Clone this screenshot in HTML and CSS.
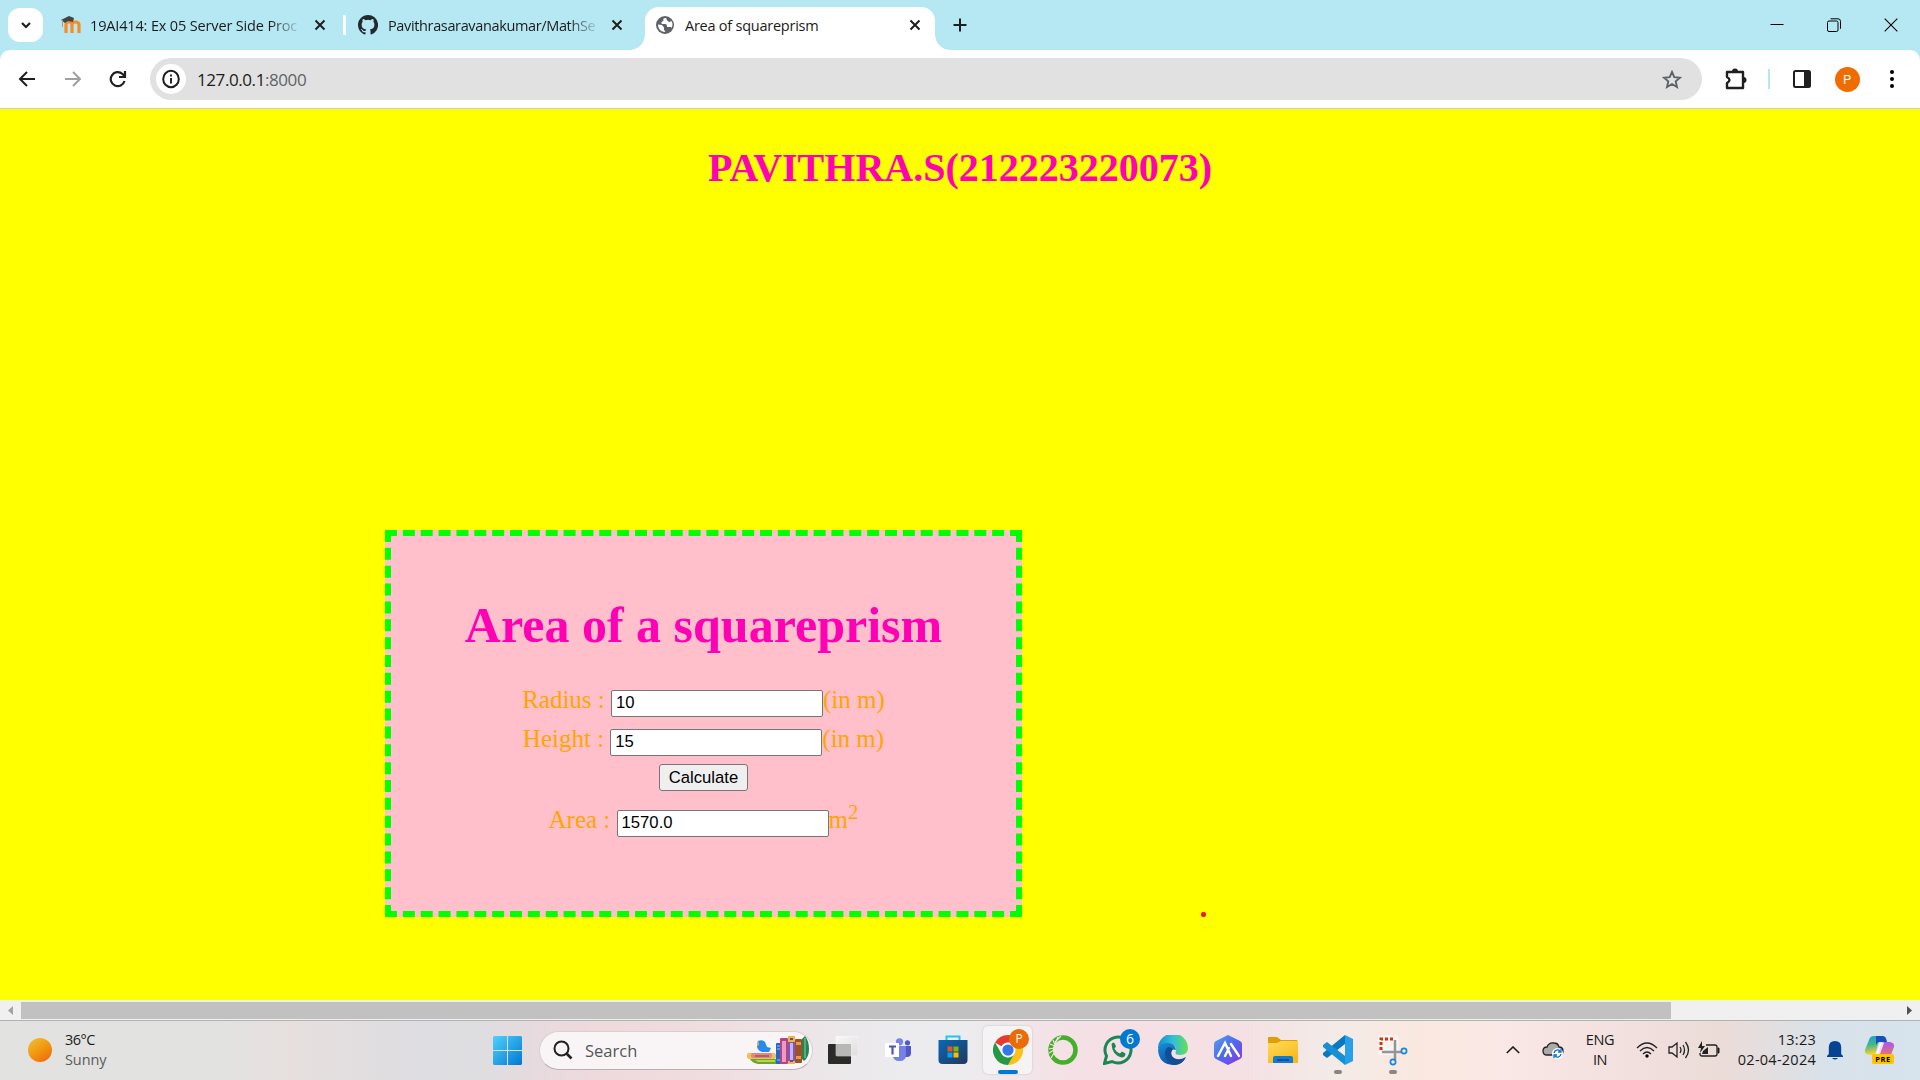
FILE: index.html
```html
<!DOCTYPE html>
<html lang="en">
<head>
<meta charset="utf-8">
<title>Area of squareprism</title>
<link rel="stylesheet" href="styles.css">
</head>
<body>
<header class="tabstrip">
  <button class="tab-search"><svg width="14" height="14" viewBox="0 0 14 14"><path d="M3 5l4 4 4-4" fill="none" stroke="#1f1f1f" stroke-width="2.2"/></svg></button>
  <div class="tab tab-first">
    <svg class="favicon" width="20" height="18" viewBox="0 0 20 18"><path d="M5 17V9q0-3 3-3t3 3v8M11 9q0-3 3.500-3t3.500 3v8" fill="none" stroke="#f98b26" stroke-width="3.200"/><path d="M0 4l8-4 5 2-1 4-5-1-3 2z" fill="#444"/><path d="M1.500 4v7" stroke="#a99b8c" stroke-width="1"/></svg>
    <span class="tab-title fade"><span class="t1">19AI414: Ex 05 Server Side Proc</span></span>
    <svg class="tab-close" width="12" height="12" viewBox="0 0 12 12"><path d="M1.500 1.500l9 9m0-9l-9 9"/></svg>
  </div>
  <span class="tab-sep"></span>
  <div class="tab tab-second">
    <svg class="favicon" width="20" height="20" viewBox="0 0 16 16"><path fill="#24292f" d="M8 0C3.580 0 0 3.580 0 8c0 3.540 2.290 6.530 5.470 7.590.4.070.55-.17.55-.38v-1.490c-2.010.37-2.530-.49-2.690-.94-.09-.23-.48-.94-.82-1.130-.28-.15-.68-.52-.01-.53.63-.01 1.080.58 1.230.82.72 1.210 1.870.87 2.330.66.07-.52.28-.87.51-1.070-1.780-.2-3.640-.89-3.640-3.950 0-.87.31-1.590.82-2.150-.08-.2-.36-1.020.08-2.120 0 0 .67-.21 2.200.82a7.500 7.500 0 0 1 4 0c1.530-1.040 2.200-.82 2.200-.82.44 1.100.16 1.920.08 2.120.51.56.82 1.270.82 2.150 0 3.070-1.870 3.750-3.650 3.950.29.25.54.73.54 1.480v2.200c0 .21.15.46.55.38A8 8 0 0 0 8 0z"/></svg>
    <span class="tab-title fade"><span class="t2">Pavithrasaravanakumar/MathSe</span></span>
    <svg class="tab-close" width="12" height="12" viewBox="0 0 12 12"><path d="M1.500 1.500l9 9m0-9l-9 9"/></svg>
  </div>
  <div class="tab tab-active">
    <svg class="favicon" width="18" height="18" viewBox="0 0 18 18"><circle cx="9" cy="9" r="9" fill="#5f6368"/><path d="M10 2c-3 0-3 1.500-2.500 3C5 5.500 5 7 6 8h3c2 0 2 1.500 2 3h2.500c1.500 0 2 .5 2 1a7 7 0 0 0 0-7l-2 1-2-1zM2 8.500l4 .5 2 2.500v2.200l1.500 2.200C4 16 2 12 2 8.500z" fill="#fff"/></svg>
    <span class="tab-title"><span class="t3">Area of squareprism</span></span>
    <svg class="tab-close" width="12" height="12" viewBox="0 0 12 12"><path d="M1.500 1.500l9 9m0-9l-9 9"/></svg>
  </div>
  <svg class="new-tab" width="14" height="14" viewBox="0 0 14 14"><path d="M7 .5v13M.5 7h13" stroke="#1f1f1f" stroke-width="2"/></svg>
  <div class="window-controls">
    <svg width="14" height="14" viewBox="0 0 14 14"><path d="M.5 6.500h13" stroke="#000"/></svg>
    <svg width="14" height="14" viewBox="0 0 14 14"><rect x=".5" y="3" width="10.500" height="10.500" rx="1.500" fill="none" stroke="#000"/><path d="M3.500.8h7.500q2.500 0 2.500 2.500v7.500" fill="none" stroke="#000"/></svg>
    <svg width="14" height="14" viewBox="0 0 14 14"><path d="M.7.7l12.600 12.600m0-12.600L.7 13.300" stroke="#000" stroke-width="1.100"/></svg>
  </div>
</header>

<nav class="toolbar-wrap">
  <div class="toolbar">
    <svg width="18" height="16" viewBox="0 0 18 16"><path d="M17 8H2M9 1L2 8l7 7" fill="none" stroke="#1f1f1f" stroke-width="2"/></svg>
    <svg width="18" height="16" viewBox="0 0 18 16"><path d="M1 8h15M9 1l7 7-7 7" fill="none" stroke="#a0a0a0" stroke-width="2"/></svg>
    <svg width="18" height="18" viewBox="0 0 18 18"><path d="M15.500 11A7 7 0 1 1 13.500 4l2 2" fill="none" stroke="#1f1f1f" stroke-width="2.200"/><path d="M16 1v6h-6" fill="none" stroke="#1f1f1f" stroke-width="2.200"/></svg>
    <div class="omnibox">
      <span class="info"><svg width="18" height="20" viewBox="0 0 18 20"><ellipse cx="9" cy="10" rx="7.800" ry="8.200" fill="none" stroke="#1f1f1f" stroke-width="2"/><path d="M9 9v5.500M9 5.500v2" stroke="#1f1f1f" stroke-width="1.900"/></svg></span>
      <span class="url">127.0.0.1<span class="port">:8000</span></span>
      <svg class="star" width="20" height="19" viewBox="0 0 20 19"><path d="M10 2l2.300 5.200 5.700.5-4.300 3.700 1.300 5.600-5-3-5 3 1.300-5.600L2 7.700l5.700-.5z" fill="none" stroke="#5f6368" stroke-width="1.900"/></svg>
    </div>
    <svg width="22" height="22" viewBox="0 0 22 22"><path d="M2 4h16v16H2v-5q5-3 0-6z" fill="none" stroke="#1f1f1f" stroke-width="2.400" stroke-linejoin="round"/><path d="M7 3.500a3 3 0 0 1 6 0zM18.500 9a3 3 0 0 1 0 6z" fill="#1f1f1f"/></svg>
    <span class="toolbar-sep"></span>
    <svg width="18" height="18" viewBox="0 0 18 18"><rect x="1" y="1" width="16" height="16" rx="1.500" fill="none" stroke="#1f1f1f" stroke-width="2"/><path d="M11 1h6v16h-6z" fill="#202124"/></svg>
    <span class="avatar">P</span>
    <svg width="6" height="20" viewBox="0 0 6 20"><circle cx="3" cy="3" r="2"/><circle cx="3" cy="10" r="2"/><circle cx="3" cy="17" r="2"/></svg>
  </div>
</nav>

<main class="page">
  <h1 class="page-title">PAVITHRA.S(212223220073)</h1>
  <form class="card">
    <h2 class="card-title">Area of a squareprism</h2>
    <div class="row"><label>Radius :</label><input type="text" value="10"><span>(in m)</span></div>
    <div class="row"><label>Height :</label><input type="text" value="15"><span>(in m)</span></div>
    <button class="calc" type="button">Calculate</button>
    <div class="row"><label>Area :</label><input type="text" value="1570.0"><span>m<span class="power">2</span></span></div>
  </form>
  <span class="marker"></span>
</main>

<div class="scrollbar">
  <svg width="21" height="20" viewBox="0 0 21 20"><path d="M13 6v9l-5-4.500z" fill="#a3a3a3"/></svg>
  <span class="thumb"></span>
  <svg width="21" height="20" viewBox="0 0 21 20"><path d="M8 6v9l5-4.500z" fill="#505050"/></svg>
</div>

<footer class="taskbar">
  <div class="weather"><span class="sun"></span><div><p>36°C</p><p class="muted">Sunny</p></div></div>
  <svg class="start" width="29" height="29" viewBox="0 0 29 29"><defs><linearGradient id="win" x2="1" y2="1"><stop stop-color="#4fd2fb"/><stop offset="1" stop-color="#0078d4"/></linearGradient></defs><path d="M1 0h13v14H0V1zM15 0h13l1 1v13H15zM0 15h14v14H1l-1-1zM15 15h14v13l-1 1H15z" fill="url(#win)"/></svg>
  <div class="search">
    <svg width="20" height="20" viewBox="0 0 20 20"><circle cx="8.500" cy="8.500" r="7" fill="none" stroke="#222" stroke-width="2"/><path d="M13.500 13.500l5 5" stroke="#222" stroke-width="2.600"/></svg>
    <span class="search-text">Search</span>
    <svg width="64" height="30" viewBox="0 0 64 30">
      <path d="M4 24h28v5H12q-6-1-8-5z" fill="#6ea52f"/><path d="M9 25h20v2H12z" fill="#b2d554"/>
      <rect x="1" y="18" width="29" height="6" rx="2" fill="#eac45b"/><rect x="5" y="18" width="21" height="5" rx="2" fill="#e98480"/><path d="M9 20h14v2H9z" fill="#9e6c61"/>
      <path d="M12 6q4-2 7 1l2 5 4 1-2 4h-7q-5-2-5-6z" fill="#268cec"/><path d="M12 5l1 5-2 1z" fill="#ffa834"/>
      <rect x="30" y="8" width="5" height="21" rx="1" fill="#2467c6"/><path d="M31 11h3m-3 3h3m-3 11h3" stroke="#91c6ff"/>
      <rect x="34" y="3" width="8" height="26" rx="1" fill="#b84286"/><rect x="36" y="6" width="4" height="21" fill="#ed9cc0"/>
      <rect x="42" y="1" width="7" height="28" rx="1" fill="#7c58b9"/><path d="M42 1h7v6h-7zm0 25h7v3h-7z" fill="#e6ba45"/><rect x="44" y="8" width="3" height="17" fill="#c9b1f2"/><path d="M44 4h3m-3 22h3" stroke="#704596" stroke-width="2"/>
      <rect x="49" y="4" width="7" height="24" rx="1" fill="#9d5127"/><path d="M50 7h5v3h-5zm0 14h5v3h-5z" fill="#e99a45"/>
      <path d="M56 4l3-3q4 5 4 13t-5 12l-2-2z" fill="#258354"/><path d="M59 3v20" stroke="#71b583" stroke-width="1.500"/>
    </svg>
  </div>
  <div class="apps">
    <div class="app"><svg width="30" height="28" viewBox="0 0 30 28"><defs><linearGradient id="tv" x2="1" y2="1"><stop stop-color="#f8f8f8"/><stop offset="1" stop-color="#dedede"/></linearGradient></defs><rect y="8" width="23" height="20" rx="1" fill="#2b2b29"/><rect x="8" width="22" height="20" rx="1" fill="url(#tv)" stroke="#fff" stroke-width=".5"/><path d="M8 8h15v12H8z" fill="#b8b8b6"/></svg></div>
    <div class="app"><svg width="26" height="24" viewBox="0 0 26 24"><circle cx="14.500" cy="3.800" r="3.600" fill="#7b83eb"/><circle cx="22.500" cy="4.800" r="2.600" fill="#5059c9"/><path d="M18 8h8v7q0 4-4 4h-4z" fill="#4f58c6"/><path d="M8 8h13v9q0 6-6.500 6T8 17z" fill="#7780e5"/><rect y="5" width="14" height="14" fill="#fff"/><path d="M4 8.500h7M7.500 8.500v8" stroke="#4b53bc" stroke-width="2.200"/></svg></div>
    <div class="app"><svg width="30" height="30" viewBox="0 0 30 30"><defs><linearGradient id="st" x2="1" y2="1"><stop stop-color="#0869b6"/><stop offset="1" stop-color="#22375b"/></linearGradient></defs><path d="M8.500 5V1.500h13V5" fill="none" stroke="#24c3f0" stroke-width="2"/><path d="M.5 5h29v20q0 4-4 4h-21q-4 0-4-4z" fill="url(#st)"/><path d="M9.500 11.500h5v5h-5z" fill="#f25022"/><path d="M15.500 11.500h5v5h-5z" fill="#7fba00"/><path d="M9.500 17.500h5v5h-5z" fill="#00a4ef"/><path d="M15.500 17.500h5v5h-5z" fill="#ffb900"/></svg></div>
    <div class="app app-active"><svg width="30" height="30" viewBox="0 0 48 48"><path d="M24 0a24 24 0 0 1 20.800 12H24a12 12 0 0 0-10.400 6L3.200 12A24 24 0 0 1 24 0z" fill="#e33b2e"/><path d="M44.800 12A24 24 0 0 1 24 48l10.400-18A12 12 0 0 0 34.400 18L31 12z" fill="#fbc116"/><path d="M24 48A24 24 0 0 1 3.200 12l10.400 18A12 12 0 0 0 34.400 30z" fill="#249845"/><circle cx="24" cy="24" r="11.500" fill="#fff"/><circle cx="24" cy="24" r="9" fill="#3377e8"/></svg><span class="profile-badge">P</span><i class="indicator"></i></div>
    <div class="app"><svg width="30" height="30" viewBox="0 0 30 30"><circle cx="15" cy="15" r="12.500" fill="none" stroke="#43b02a" stroke-width="4.500"/><path d="M13 1L7 7m3-5l-3 7M5 5l2 5M2 9l5 2M1 14l5-1M1 18l5-3M3 23l3-5" stroke="#f6e2e5" stroke-width="1.200"/></svg></div>
    <div class="app"><svg width="30" height="30" viewBox="0 0 30 30"><path d="M1.500 28.500l2-7.500A13 13 0 1 1 9 26.500z" fill="none" stroke="#1b8755" stroke-width="3"/><path d="M8.500 9q2-3 3.500 0l1 2.500-1.500 2q2 4 5.500 5l2-2 3.500 2q0 4-4 4Q9 20 8.500 9z" fill="#1b8755"/></svg><span class="count-badge">6</span></div>
    <div class="app"><svg width="30" height="30" viewBox="0 0 30 30"><defs><linearGradient id="eg"><stop stop-color="#168bcf"/><stop offset=".5" stop-color="#32bfd7"/><stop offset="1" stop-color="#64e052"/></linearGradient><linearGradient id="eb" x2=".5" y2="1"><stop stop-color="#168edb"/><stop offset="1" stop-color="#0e4f9e"/></linearGradient></defs><path d="M0 14A15 15 0 0 1 30 13q0 7-8 7-6 0-4-4 1-7-8-7Q3 9 0 14z" fill="url(#eg)"/><path d="M0 15Q1 8 9 8q8 0 9 7-5-2-5 4 1 7 8 6 5 0 7-3-4 8-13 8Q1 29 0 15z" fill="url(#eb)"/><path d="M10 12q-5 4-2 11 3 6 9 7 8-1 11-8-9 5-14-1-2-4 1-7-2-2-5-2z" fill="#104e97"/></svg></div>
    <div class="app"><svg width="28" height="30" viewBox="0 0 28 30"><defs><linearGradient id="hx" x2="1" y2="1"><stop stop-color="#52a0ee"/><stop offset=".5" stop-color="#5068ec"/><stop offset="1" stop-color="#8b32ed"/></linearGradient></defs><path d="M14 0l12 6q2 1 2 3v12q0 2-2 3l-12 6-12-6q-2-1-2-3V9q0-2 2-3z" fill="url(#hx)"/><path d="M4 21l7-13 6 13M11 21l4-8M17 9l8 12" fill="none" stroke="#fff" stroke-width="2.400" stroke-linecap="round"/></svg></div>
    <div class="app"><svg width="30" height="28" viewBox="0 0 30 28"><defs><linearGradient id="fd" x2=".6" y2="1"><stop stop-color="#ffdc5e"/><stop offset="1" stop-color="#f9b918"/></linearGradient></defs><path d="M0 2q0-1 1-1h8l4 3h16l1 2v5H0z" fill="#dea006"/><path d="M0 7h9l4-2h17v22H0z" fill="url(#fd)"/><path d="M5 27v-5q0-2 2-2h16q2 0 2 2v5z" fill="#127bd0"/><path d="M9 23h12v2H9z" fill="#0a509b"/></svg></div>
    <div class="app"><svg width="30" height="30" viewBox="0 0 30 30"><path d="M22 0v9L4 23l-4-3v-2z" fill="#0878bf"/><path d="M4 7l18 14v9L0 12v-2z" fill="#1590d5"/><path d="M22 0l8 4v22l-8 4z" fill="#279fe9"/></svg><i class="indicator idle"></i></div>
    <div class="app"><svg width="30" height="31" viewBox="0 0 30 31"><rect width="21" height="20" rx="2" fill="#fff" opacity=".45"/><path d="M3 15V4h14" fill="none" stroke="#c8390c" stroke-width="3" stroke-dasharray="3 2"/><path d="M4 17h19M17 5v20" stroke="#91969b" stroke-width="2.500"/><circle cx="26" cy="16" r="2.600" fill="none" stroke="#1688d8" stroke-width="1.700"/><circle cx="15" cy="27" r="2.600" fill="none" stroke="#1688d8" stroke-width="1.700"/></svg><i class="indicator idle"></i></div>
  </div>
  <div class="tray">
    <svg width="14" height="8" viewBox="0 0 14 8"><path d="M.8 7L7 1l6.200 6" fill="none" stroke="#1b1b1b" stroke-width="1.600"/></svg>
    <svg width="22" height="20" viewBox="0 0 22 20"><path d="M5 15Q1 15 1 11q0-4 4-4 2-5 7-4 4 0 5 4 4 0 4 4 0 4-4 4z" fill="#aaa" stroke="#222" stroke-width="1.300"/><circle cx="15.500" cy="13.500" r="5.500" fill="#fff"/><path d="M12 13a3.500 3.500 0 0 1 6-2m1-2v3h-3M19 14a3.500 3.500 0 0 1-6 2m-1 2v-3h3" fill="none" stroke="#0875ca" stroke-width="1.300"/></svg>
    <div class="lang"><p>ENG</p><p>IN</p></div>
    <svg width="22" height="18" viewBox="0 0 22 18"><path d="M1 7q10-10 20 0M4 10q7-7 14 0M7 13q4-4 8 0" fill="none" stroke="#222" stroke-width="1.300"/><circle cx="11" cy="15" r="1.700"/></svg>
    <svg width="22" height="18" viewBox="0 0 22 18"><path d="M1 6h3l5-4v14l-5-4H1zM12 6q2 3 0 6M15 4q3 5 0 10M17.500 1q6 8 0 16" fill="none" stroke="#222" stroke-width="1.300"/></svg>
    <svg width="22" height="18" viewBox="0 0 22 18"><path d="M8 4h9q2 0 2 2v7q0 2-2 2H4q-2 0-2-2v-1" fill="none" stroke="#222" stroke-width="1.300"/><path d="M20 7h1v5h-1z" stroke="#222"/><path d="M4 13l1-3 5-4v7zM4 0L0 7h3l-1 5 5-7H4z" fill="#222"/></svg>
    <div class="clock"><p>13:23</p><p>02-04-2024</p></div>
    <svg width="16" height="20" viewBox="0 0 16 20"><path d="M1.800 14V7Q2 1 8 1t6.200 6v7L16 16v1H0v-1zM5 18h6q-3 3-6 0z" fill="#064393"/></svg>
    <svg width="30" height="30" viewBox="0 0 30 30"><defs><linearGradient id="c1" x2=".2" y2="1"><stop stop-color="#1b9de2"/><stop offset=".5" stop-color="#43b789"/><stop offset="1" stop-color="#ffd22b"/></linearGradient><linearGradient id="c2" x2="0" y2="1"><stop stop-color="#a35ceb"/><stop offset="1" stop-color="#ff745c"/></linearGradient></defs><path d="M9 1h10q-5 1-8 16-1 3-4 3-8 0-7-5L4 5q1-4 5-4z" fill="url(#c1)"/><path d="M11 1h7q3 0 4 6h-8q-2 0-3 3z" fill="#174fbd"/><path d="M20 7h5q5 1 4 5l-3 8q-1 3-5 3H8q5-1 7-10 1-6 5-6z" fill="url(#c2)"/><path d="M15 8h4l-4 11h-4z" fill="#fff" opacity=".8"/><rect x="7" y="19" width="22" height="10" rx="2" fill="#ffc400"/><text x="18" y="27.200" class="pre">PRE</text></svg>
  </div>
</footer>
</body>
</html>
```
FILE: styles.css
```css
* { box-sizing: border-box; }
html, body { height: 100%; }
body { margin: 0; display: flex; flex-direction: column; overflow: hidden; font-family: "Open Sans", "Noto Sans", sans-serif; color: #1b1b1b; }
p { margin: 0; }
svg { display: block; flex: none; }

/* tab strip */
.tabstrip { height: 50px; flex: none; background: #b5e8f3; display: flex; align-items: center; padding-left: 8px; }
.tab-search { width: 35px; height: 34px; margin-right: 6px; border: 0; border-radius: 12px; background: #fff; padding: 0; display: grid; place-items: center; }
.tab { height: 43px; align-self: flex-end; display: grid; align-items: center; padding-bottom: 7px; position: relative; }
.tab-first { width: 294px; grid-template-columns: 41px 224px 12px; }
.tab-second { width: 299px; grid-template-columns: 42px 223px 12px; }
.tab-active { width: 290px; grid-template-columns: 40px 224px 12px; background: #fff; border-radius: 14px 14px 0 0; }
.tab-active::before, .tab-active::after { content: ""; position: absolute; bottom: 0; width: 15px; height: 15px; }
.tab-active::before { left: -15px; background: radial-gradient(circle at 0 0, transparent 14.500px, #fff 15px); }
.tab-active::after { right: -15px; background: radial-gradient(circle at 100% 0, transparent 14.500px, #fff 15px); }
.favicon { margin-left: 12px; }
.tab-active .favicon { margin-left: 11px; }
.tab-title { padding-top: 1px; font-size: 14.500px; line-height: 20px; white-space: nowrap; overflow: hidden; }
.fade { width: 210px; -webkit-mask-image: linear-gradient(90deg, #000 180px, transparent 212px); mask-image: linear-gradient(90deg, #000 180px, transparent 212px); }
.t1 { letter-spacing: -.15px; }
.t2 { letter-spacing: -.36px; }
.t3 { letter-spacing: -.24px; }
.tab-close { fill: none; stroke: #1f1f1f; stroke-width: 2; }
.tab-sep { width: 3px; height: 20px; background: #fff; border-radius: 1px; }
.new-tab { margin-left: 18px; }
.window-controls { margin-left: auto; margin-right: 22px; display: flex; gap: 43px; }

/* toolbar */
.toolbar-wrap { height: 59px; flex: none; background: #b5e8f3; }
.toolbar { height: 59px; background: #fff; border-radius: 10px 10px 0 0; border-bottom: 1px solid #cfcfcf; display: grid; align-items: center; justify-items: center; grid-template-columns: 54px 38px 52px 1564px 56px 10px 56px 34px 56px; }
.omnibox { width: 1552px; height: 42px; border-radius: 21px; background: #e1e1e1; display: flex; align-items: center; padding: 0 20px 0 6px; }
.info { width: 30px; height: 30px; border-radius: 50%; background: #fff; display: grid; place-items: center; }
.url { margin-left: 11px; font-size: 17px; letter-spacing: -.42px; }
.port { color: #5f6368; }
.star { margin-left: auto; }
.toolbar-sep { width: 2px; height: 20px; background: #b5e8f3; }
.avatar { width: 25px; height: 25px; border-radius: 50%; background: #ef6c00; color: #fff; font: 13px/25px Roboto, sans-serif; text-align: center; }

/* page */
.page { flex: 1; position: relative; background: #ff0; font-family: "Liberation Serif", serif; }
.page-title { margin: 36px 0 0; font-size: 40px; line-height: 46px; text-align: center; color: #ff00b4; }
.card { width: 637px; height: 387px; margin: 339px 0 0 385px; border: 6px dashed #0f0; background: #ffc0cb; padding-top: 61px; color: orange; font-size: 25px; }
.card-title { margin: 0 0 27px; font-size: 50px; line-height: 56px; text-align: center; color: #ff00b4; }
.row { height: 39px; line-height: 39px; display: flex; justify-content: center; align-items: baseline; white-space: nowrap; }
.row label { margin-right: 6.250px; }
.row input { width: 212px; height: 27px; border: 1px solid #767676; border-radius: 2px; padding: 1px 4px; background: #fff; color: #000; font: 16.670px "Liberation Sans", sans-serif; }
.power { font-size: 20.800px; line-height: 0; position: relative; top: -9px; }
.calc { display: block; width: 89px; height: 27px; margin: 6px auto 9px; border: 1px solid #767676; border-radius: 3px; background: #efefef; color: #000; padding: 0; font: 16.670px "Liberation Sans", sans-serif; }
.marker { position: absolute; left: 1201px; top: 803px; width: 5px; height: 5px; border-radius: 2px; background: #ed1c24; }

/* horizontal scrollbar */
.scrollbar { height: 20px; flex: none; display: flex; align-items: center; justify-content: space-between; background: #f0f0f0; }
.thumb { width: 1650px; height: 17px; margin: 1px auto 0 0; background: #c1c1c1; }

/* taskbar */
.taskbar { height: 60px; flex: none; border-top: 1px solid #b2b2b2; display: flex; align-items: center; padding-bottom: 1px; background: linear-gradient(90deg, #e2e3e1 0, #e2e3e1 220px, #e6dfde 290px, #dedde1 420px, #dedde0 480px, #eed9dd 590px, #f0dde0 710px, #ebe9eb 850px, #ececef 960px, #f5e1e5 1070px, #f5e1e4 1250px, #f3ebe7 1330px, #fae8e0 1420px, #f9e8e5 1500px, #f0dfdc 1650px, #ecdcd8 1720px, #d8e2ea 1830px, #d7e4ed 1920px); }
.weather { width: 493px; padding-left: 28px; display: flex; align-items: center; gap: 13px; font-size: 14.500px; line-height: 20px; letter-spacing: -.5px; }
.sun { width: 24px; height: 24px; border-radius: 50%; background: linear-gradient(145deg, #eec33a, #f1980f 50%, #f0600c); }
.muted { color: #5b5b5b; letter-spacing: -.1px; }
.start { margin-right: 17px; }
.search { width: 274px; height: 39px; border-radius: 20px; background: #f9f5f6; border: 1px solid #d9cfd1; border-bottom-color: #b9afb1; display: flex; align-items: center; padding: 0 2px 0 13px; }
.search-text { margin: 0 auto 0 12px; font-size: 16.500px; color: #555; }
.apps { display: grid; grid-template-columns: repeat(11, 55px); margin-left: 2px; }
.app { height: 48px; margin: 0 3px; display: grid; place-items: center; position: relative; border-radius: 5px; }
.app-active { background: #f6f3f4; box-shadow: 0 0 2px #bbb; }
.profile-badge, .count-badge { position: absolute; top: 3px; right: 3px; width: 20px; height: 20px; border-radius: 50%; background: #eb6b06; color: #fff; font-size: 12px; line-height: 20px; text-align: center; }
.count-badge { top: 3px; right: 2px; background: #0078d4; font-size: 14px; }
.indicator { position: absolute; left: 50%; bottom: 0; width: 20px; height: 4px; margin-left: -10px; border-radius: 2px; background: #0078d4; }
.idle { width: 8px; margin-left: -4px; background: #898582; }
.tray { width: 413px; margin-left: 73px; display: grid; grid-template-columns: 40px 40px 54px 40px 24px 36px 89px 38px 52px; align-items: center; justify-items: center; font-size: 14.500px; line-height: 20px; }
.lang { text-align: center; letter-spacing: -.4px; }
.clock { text-align: right; justify-self: end; white-space: nowrap; letter-spacing: .25px; }
.pre { font: 700 7.500px "Open Sans", sans-serif; text-anchor: middle; letter-spacing: .5px; }
```
